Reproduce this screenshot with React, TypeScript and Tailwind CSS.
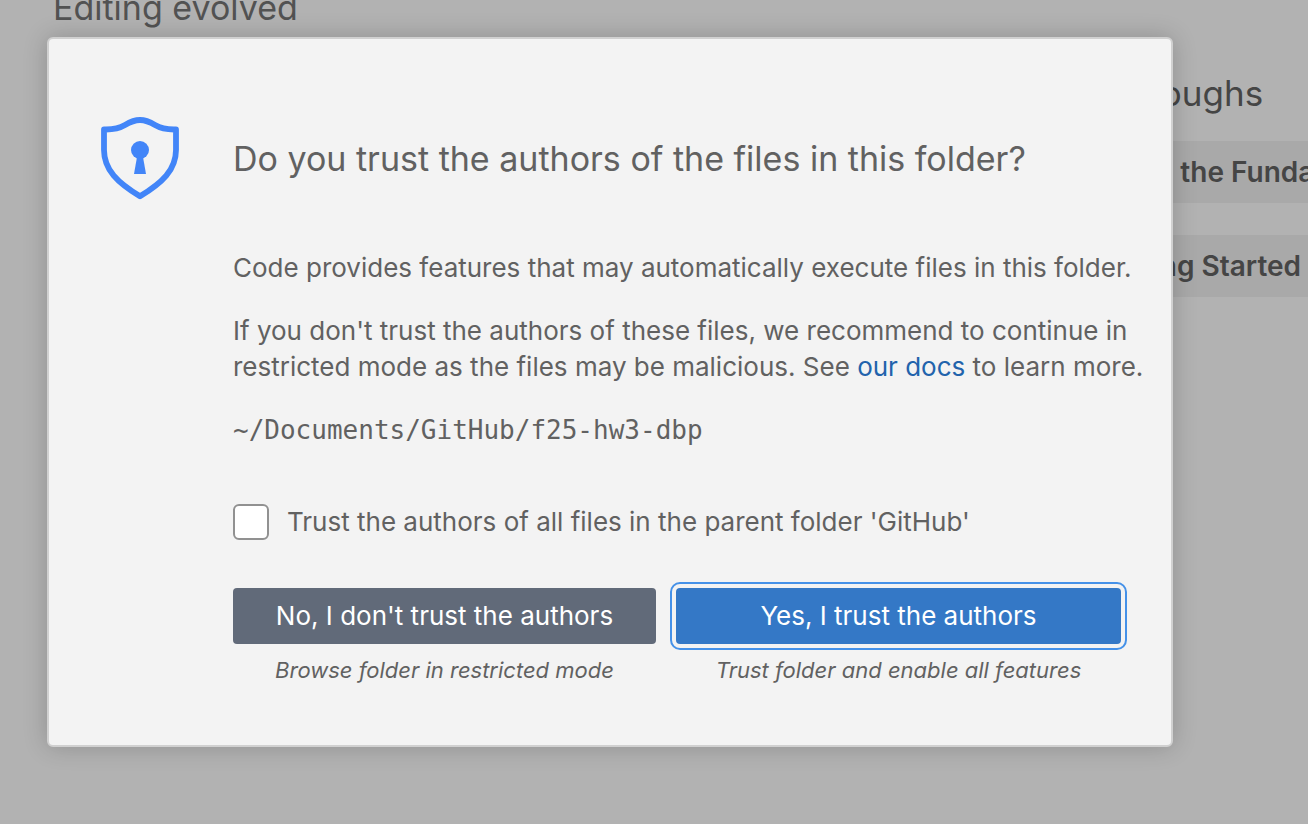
import { useState } from "react";
import { BookOpen, Star } from "lucide-react";

function ShieldIcon() {
  return (
    <svg viewBox="0 0 80 84" className="h-[84px] w-20 shrink-0" fill="none" aria-hidden="true">
      <path
        d="M4 12.5H6C14 12.5 20 11 25 8C30 5 34 3 40 3C46 3 50 5 55 8C60 11 66 12.5 74 12.5H76V33C76 53 62 66 40 79.3C18 66 4 53 4 33Z"
        stroke="#4285f8"
        strokeWidth="5.8"
        strokeLinejoin="round"
      />
      <circle cx="40" cy="33" r="9" fill="#4285f8" />
      <path d="M37 40H43L46 57H34Z" fill="#4285f8" />
    </svg>
  );
}

function WelcomePage() {
  const walkthroughs = [
    { title: "Learn the Fundamentals", Icon: BookOpen },
    { title: "Getting Started", Icon: Star },
  ];
  return (
    <main aria-hidden="true" className="flex min-h-screen justify-between overflow-hidden bg-[#b2b2b2] text-[#454545]">
      <p className="-mt-4 ml-[53px] h-12 text-[34px] leading-[48px] whitespace-nowrap text-[#525252]">Editing evolved</p>
      <section className="w-[272px] shrink-0 pt-[69px]">
        <h2 className="text-[35px] leading-[48px] whitespace-nowrap">Walkthroughs</h2>
        <ul className="mt-6 flex flex-col gap-8">
          {walkthroughs.map(({ title, Icon }) => (
            <li key={title} className="flex h-[62px] items-center gap-3 overflow-hidden bg-[#a9a9a9] pl-4 text-[28px] font-semibold whitespace-nowrap">
              <Icon className="size-8 shrink-0" />
              {title}
            </li>
          ))}
        </ul>
      </section>
    </main>
  );
}

export default function App() {
  const [trustParent, setTrustParent] = useState(false);
  return (
    <div className="relative font-['Inter','Liberation_Sans',sans-serif]">
      <WelcomePage />
      <div className="absolute inset-x-0 top-[37px] pr-[135px] pl-[47px]">
        <section
          role="dialog"
          aria-modal="true"
          aria-labelledby="trust-title"
          className="rounded-md border-2 border-[#d0d0d0] bg-[#f3f3f3] pt-[78px] pr-6 pb-[57px] pl-[51px] text-[26px] leading-9 text-[#616161] shadow-[0_0_24px_rgba(0,0,0,0.2)]"
        >
          <header className="flex items-center gap-[53px]">
            <ShieldIcon />
            <h1 id="trust-title" className="text-[34px] leading-[48px] whitespace-nowrap">
              Do you trust the authors of the files in this folder?
            </h1>
          </header>
          <div className="mt-[49px] pl-[133px]">
            <p>Code provides features that may automatically execute files in this folder.</p>
            <p className="mt-[27px]">
              If you don't trust the authors of these files, we recommend to continue in
              <br />
              restricted mode as the files may be malicious. See{" "}
              <a href="#docs" className="text-[#2263ac]">our docs</a> to learn more.
            </p>
            <p className="mt-[27px] font-['DejaVu_Sans_Mono',monospace]">~/Documents/GitHub/f25-hw3-dbp</p>
            <label className="mt-14 flex items-center gap-[18px]">
              <input
                type="checkbox"
                checked={trustParent}
                onChange={(e) => setTrustParent(e.target.checked)}
                className="size-9 shrink-0 appearance-none rounded-md border-2 border-[#919191] bg-white checked:bg-[#3478c6]"
              />
              Trust the authors of all files in the parent folder 'GitHub'
            </label>
            <div className="mt-12 flex gap-5 pr-[26px]">
              <div className="w-[423px] shrink-0 text-center">
                <button type="button" className="h-14 w-full rounded-sm bg-[#616a79] text-white">
                  No, I don't trust the authors
                </button>
                <p className="mt-2 text-[22px] italic">Browse folder in restricted mode</p>
              </div>
              <div className="grow text-center">
                <button
                  type="button"
                  className="h-14 w-full rounded-sm bg-[#3478c6] text-white outline-2 outline-offset-4 outline-[#4591e8]"
                >
                  Yes, I trust the authors
                </button>
                <p className="mt-2 text-[22px] italic">Trust folder and enable all features</p>
              </div>
            </div>
          </div>
        </section>
      </div>
    </div>
  );
}
